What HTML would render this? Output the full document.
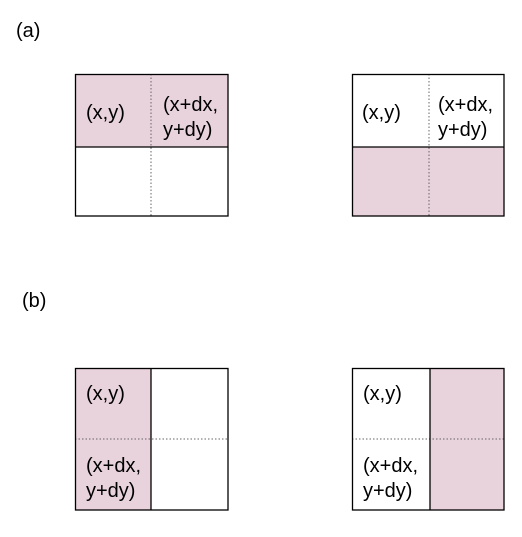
<!DOCTYPE html>
<html><head><style>body{margin:0;background:#fff}</style></head><body>
<svg width="522" height="532" xmlns="http://www.w3.org/2000/svg" font-family="Liberation Sans, sans-serif" font-size="20" fill="#000">
<rect width="522" height="532" fill="#fff"/>
<text x="16" y="37">(a)</text>
<text x="22" y="307">(b)</text>
<rect x="75" y="74" width="153" height="73" fill="#e8d2dc"/>
<line x1="151" y1="74" x2="151" y2="216" stroke="#666" stroke-dasharray="1.5,2"/>
<line x1="75" y1="147" x2="228" y2="147" stroke="#000" stroke-width="1.3"/>
<rect x="75.5" y="74.5" width="152.5" height="141.5" fill="none" stroke="#000" stroke-width="1.3"/>
<text x="86" y="119">(x,y)</text>
<text x="163" y="111">(x+dx,</text>
<text x="163" y="136">y+dy)</text>
<rect x="352" y="147" width="152" height="69" fill="#e8d2dc"/>
<line x1="429" y1="74" x2="429" y2="216" stroke="#666" stroke-dasharray="1.5,2"/>
<line x1="352" y1="147" x2="504" y2="147" stroke="#000" stroke-width="1.3"/>
<rect x="352.5" y="74.5" width="151.5" height="141.5" fill="none" stroke="#000" stroke-width="1.3"/>
<text x="362" y="119">(x,y)</text>
<text x="438" y="111">(x+dx,</text>
<text x="438" y="136">y+dy)</text>
<rect x="75" y="368" width="76" height="142" fill="#e8d2dc"/>
<line x1="75" y1="439" x2="228" y2="439" stroke="#666" stroke-dasharray="1.5,2"/>
<line x1="151" y1="368" x2="151" y2="510" stroke="#000" stroke-width="1.3"/>
<rect x="75.5" y="368.5" width="152.5" height="141.5" fill="none" stroke="#000" stroke-width="1.3"/>
<text x="86" y="400">(x,y)</text>
<text x="86" y="472">(x+dx,</text>
<text x="86" y="497">y+dy)</text>
<rect x="430" y="368" width="74" height="142" fill="#e8d2dc"/>
<line x1="352" y1="439" x2="504" y2="439" stroke="#666" stroke-dasharray="1.5,2"/>
<line x1="430" y1="368" x2="430" y2="510" stroke="#000" stroke-width="1.3"/>
<rect x="352.5" y="368.5" width="151.5" height="141.5" fill="none" stroke="#000" stroke-width="1.3"/>
<text x="363" y="400">(x,y)</text>
<text x="363" y="472">(x+dx,</text>
<text x="363" y="497">y+dy)</text>
</svg>
</body></html>
